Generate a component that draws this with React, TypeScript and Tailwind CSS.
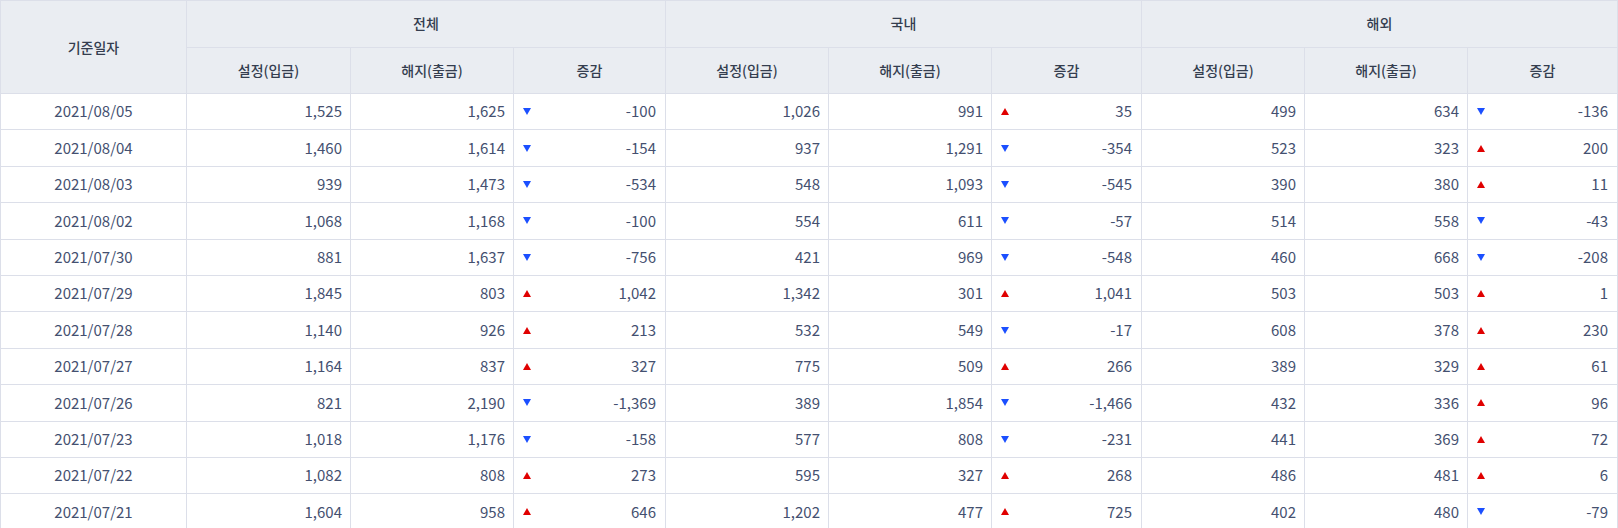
import React from 'react'

type Row = {
  date: string
  total: [number, number, number]
  domestic: [number, number, number]
  overseas: [number, number, number]
}

const rows: Row[] = [
  { date: '2021/08/05', total: [1525, 1625, -100], domestic: [1026, 991, 35], overseas: [499, 634, -136] },
  { date: '2021/08/04', total: [1460, 1614, -154], domestic: [937, 1291, -354], overseas: [523, 323, 200] },
  { date: '2021/08/03', total: [939, 1473, -534], domestic: [548, 1093, -545], overseas: [390, 380, 11] },
  { date: '2021/08/02', total: [1068, 1168, -100], domestic: [554, 611, -57], overseas: [514, 558, -43] },
  { date: '2021/07/30', total: [881, 1637, -756], domestic: [421, 969, -548], overseas: [460, 668, -208] },
  { date: '2021/07/29', total: [1845, 803, 1042], domestic: [1342, 301, 1041], overseas: [503, 503, 1] },
  { date: '2021/07/28', total: [1140, 926, 213], domestic: [532, 549, -17], overseas: [608, 378, 230] },
  { date: '2021/07/27', total: [1164, 837, 327], domestic: [775, 509, 266], overseas: [389, 329, 61] },
  { date: '2021/07/26', total: [821, 2190, -1369], domestic: [389, 1854, -1466], overseas: [432, 336, 96] },
  { date: '2021/07/23', total: [1018, 1176, -158], domestic: [577, 808, -231], overseas: [441, 369, 72] },
  { date: '2021/07/22', total: [1082, 808, 273], domestic: [595, 327, 268], overseas: [486, 481, 6] },
  { date: '2021/07/21', total: [1604, 958, 646], domestic: [1202, 477, 725], overseas: [402, 480, -79] },
]

const fmt = (n: number) => n.toLocaleString('en-US')

function Arrow({ up }: { up: boolean }) {
  return up ? (
    <svg width="8" height="7" viewBox="0 0 8 7" className="shrink-0">
      <path d="M4 0 L8 7 L0 7 Z" fill="#e00000" />
    </svg>
  ) : (
    <svg width="8" height="7" viewBox="0 0 8 7" className="shrink-0">
      <path d="M0 0 L8 0 L4 7 Z" fill="#1b4fff" />
    </svg>
  )
}

const th = 'border border-[#dcdfe9] bg-[#eaedf2] font-medium text-[14px] text-[#343d4f] text-center align-middle'
const td = 'border border-[#dcdfe9] text-[15px] text-[#445070] align-middle'

function Group({ vals }: { vals: [number, number, number] }) {
  const diff = vals[2]
  return (
    <>
      <td className={`${td} text-right pr-[8px]`}>{fmt(vals[0])}</td>
      <td className={`${td} text-right pr-[8px]`}>{fmt(vals[1])}</td>
      <td className={`${td} pl-[9px] pr-[9px]`}>
        <div className="flex items-center justify-between">
          <Arrow up={diff > 0} />
          <span>{fmt(diff)}</span>
        </div>
      </td>
    </>
  )
}

export default function App() {
  const widths = [186, 164, 163, 152, 163, 163, 150, 163, 163, 150]
  return (
    <div
      className="w-[1618px] h-[528px] overflow-hidden bg-white"
      style={{ fontFamily: '"Noto Sans CJK KR", "Noto Sans", sans-serif' }}
    >
      <table className="table-fixed border-collapse w-[1617px]">
        <colgroup>
          {widths.map((w, i) => (
            <col key={i} style={{ width: w }} />
          ))}
        </colgroup>
        <thead>
          <tr className="h-[46.5px]">
            <th rowSpan={2} className={th}>기준일자</th>
            <th colSpan={3} className={th}>전체</th>
            <th colSpan={3} className={th}>국내</th>
            <th colSpan={3} className={th}>해외</th>
          </tr>
          <tr className="h-[46.5px]">
            {['전체', '국내', '해외'].map((g) => (
              <React.Fragment key={g}>
                <th className={th}>설정(입금)</th>
                <th className={th}>해지(출금)</th>
                <th className={th}>증감</th>
              </React.Fragment>
            ))}
          </tr>
        </thead>
        <tbody>
          {rows.map((r) => (
            <tr key={r.date} className="h-[36.4px]">
              <td className={`${td} text-center`}>{r.date}</td>
              <Group vals={r.total} />
              <Group vals={r.domestic} />
              <Group vals={r.overseas} />
            </tr>
          ))}
        </tbody>
      </table>
    </div>
  )
}
